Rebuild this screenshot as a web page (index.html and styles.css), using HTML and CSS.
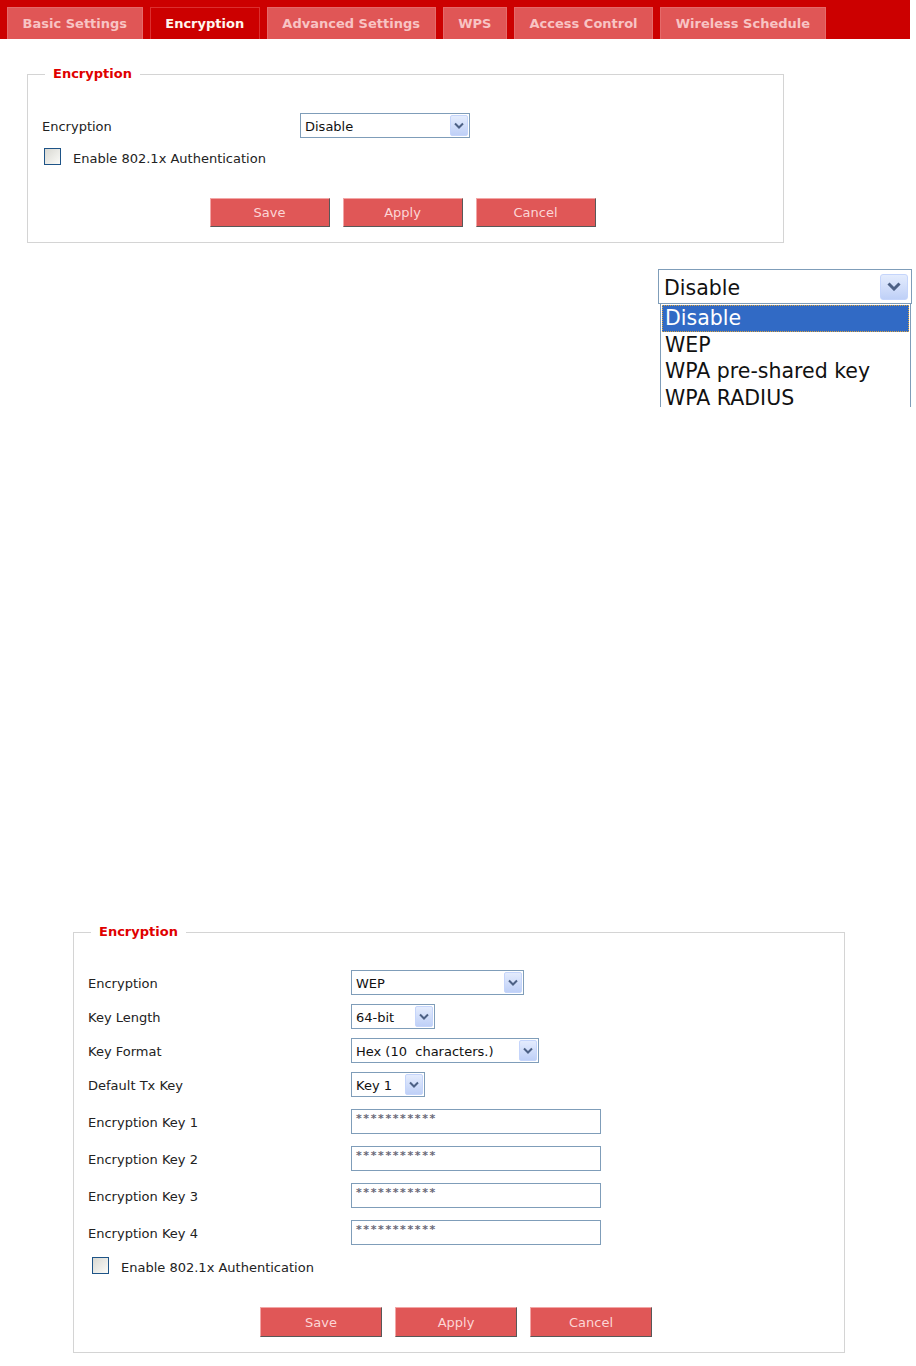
FILE: index.html
```html
<!DOCTYPE html>
<html lang="en">
<head>
<meta charset="utf-8">
<title>Wireless - Encryption</title>
<link rel="stylesheet" href="styles.css">
</head>
<body>
<nav class="tabs">
  <a class="tab">Basic Settings</a>
  <a class="tab tab--active">Encryption</a>
  <a class="tab">Advanced Settings</a>
  <a class="tab">WPS</a>
  <a class="tab">Access Control</a>
  <a class="tab">Wireless Schedule</a>
</nav>

<fieldset class="panel panel--basic">
  <legend>Encryption</legend>
  <div class="fields">
    <div class="field">
      <span class="field-label">Encryption</span>
      <div class="select select--enc-basic">
        <span class="select-value">Disable</span>
        <span class="select-arrow"><svg width="10" height="7" viewBox="0 0 10 7"><path d="M1 1.5 L5 5.5 L9 1.5" fill="none" stroke="#4d6185" stroke-width="2"/></svg></span>
      </div>
    </div>
  </div>
  <label class="check check--basic"><span class="checkbox"></span><span class="check-text">Enable 802.1x Authentication</span></label>
  <div class="actions">
    <button class="btn">Save</button>
    <button class="btn">Apply</button>
    <button class="btn">Cancel</button>
  </div>
</fieldset>

<div class="combo-demo">
  <div class="combo-field">
    <span class="combo-value">Disable</span>
    <span class="combo-arrow"><svg width="14" height="9" viewBox="0 0 14 9"><path d="M1.5 1.5 L7 7 L12.5 1.5" fill="none" stroke="#4d6185" stroke-width="3"/></svg></span>
  </div>
  <ul class="combo-list">
    <li class="combo-option combo-option--selected">Disable</li>
    <li class="combo-option">WEP</li>
    <li class="combo-option">WPA pre-shared key</li>
    <li class="combo-option">WPA RADIUS</li>
  </ul>
</div>

<fieldset class="panel panel--wep">
  <legend>Encryption</legend>
  <div class="fields">
    <div class="field">
      <span class="field-label">Encryption</span>
      <div class="select select--enc">
        <span class="select-value">WEP</span>
        <span class="select-arrow"><svg width="10" height="7" viewBox="0 0 10 7"><path d="M1 1.5 L5 5.5 L9 1.5" fill="none" stroke="#4d6185" stroke-width="2"/></svg></span>
      </div>
    </div>
    <div class="field">
      <span class="field-label">Key Length</span>
      <div class="select select--len">
        <span class="select-value">64-bit</span>
        <span class="select-arrow"><svg width="10" height="7" viewBox="0 0 10 7"><path d="M1 1.5 L5 5.5 L9 1.5" fill="none" stroke="#4d6185" stroke-width="2"/></svg></span>
      </div>
    </div>
    <div class="field">
      <span class="field-label">Key Format</span>
      <div class="select select--fmt">
        <span class="select-value">Hex (10  characters.)</span>
        <span class="select-arrow"><svg width="10" height="7" viewBox="0 0 10 7"><path d="M1 1.5 L5 5.5 L9 1.5" fill="none" stroke="#4d6185" stroke-width="2"/></svg></span>
      </div>
    </div>
    <div class="field">
      <span class="field-label">Default Tx Key</span>
      <div class="select select--tx">
        <span class="select-value">Key 1</span>
        <span class="select-arrow"><svg width="10" height="7" viewBox="0 0 10 7"><path d="M1 1.5 L5 5.5 L9 1.5" fill="none" stroke="#4d6185" stroke-width="2"/></svg></span>
      </div>
    </div>
    <div class="field field--text">
      <span class="field-label">Encryption Key 1</span>
      <div class="textbox">***********</div>
    </div>
    <div class="field field--text">
      <span class="field-label">Encryption Key 2</span>
      <div class="textbox">***********</div>
    </div>
    <div class="field field--text">
      <span class="field-label">Encryption Key 3</span>
      <div class="textbox">***********</div>
    </div>
    <div class="field field--text">
      <span class="field-label">Encryption Key 4</span>
      <div class="textbox">***********</div>
    </div>
  </div>
  <label class="check check--wep"><span class="checkbox"></span><span class="check-text">Enable 802.1x Authentication</span></label>
  <div class="actions">
    <button class="btn">Save</button>
    <button class="btn">Apply</button>
    <button class="btn">Cancel</button>
  </div>
</fieldset>
</body>
</html>
```

FILE: styles.css
```css
* { box-sizing: border-box; }

body {
  margin: 0;
  background: #fff;
  font-family: "DejaVu Sans", Tahoma, sans-serif;
  font-size: 13px;
  color: #222;
}

/* ---------- tab bar ---------- */
.tabs {
  display: flex;
  gap: 7px;
  width: 910px;
  height: 39px;
  padding: 7px 0 0 7px;
  background: #cc0000;
}
.tab {
  display: flex;
  align-items: center;
  justify-content: center;
  height: 32px;
  padding: 0 14.6px;
  background: #e05656;
  color: #f8c4c4;
  font-weight: bold;
  font-size: 13px;
  border: 1px solid #e56a6a;
  border-bottom: 0;
}
.tab--active {
  background: #cc0000;
  color: #fff6ee;
  border-color: #dc3030;
}

/* ---------- panels ---------- */
.panel {
  margin: 0;
  border: 1px solid #d4d4d4;
  padding: 31px 14px 15px;
  min-width: 0;
}
.panel legend {
  margin-left: 3px;
  padding: 0 8px;
  font-size: 13px;
  font-weight: bold;
  line-height: 16px;
  color: #e00000;
}
.panel--basic {
  margin: 27px 0 0 27px;
  width: 757px;
}
.panel--wep {
  margin: 517px 0 0 73px;
  width: 772px;
  padding-top: 30px;
  padding-bottom: 15px;
}

.fields {
  display: flex;
  flex-direction: column;
  gap: 9px;
}
.field {
  display: flex;
  align-items: center;
  height: 25px;
}
.field--text { margin-top: 3px; }
.field-label {
  flex: none;
  width: 258px;
  padding-top: 2px;
}
.panel--wep .field-label { width: 263px; }

/* ---------- select ---------- */
.select {
  display: flex;
  align-items: center;
  height: 25px;
  border: 1px solid #7f9db9;
  background: #fff;
  padding: 1px 1px 1px 4px;
}
.select-value {
  flex: 1;
  white-space: pre;
  color: #111;
  padding-top: 1px;
}
.select-arrow {
  flex: none;
  display: flex;
  align-items: center;
  justify-content: center;
  width: 18px;
  height: 21px;
  border: 1px solid #c5d5fb;
  border-radius: 2px;
  background: linear-gradient(#e4ecfd, #bfd0f7);
}
.select--enc-basic { width: 170px; }
.select--enc { width: 173px; }
.select--len { width: 84px; }
.select--fmt { width: 188px; }
.select--tx { width: 74px; }

/* ---------- text box ---------- */
.textbox {
  width: 250px;
  height: 25px;
  border: 1px solid #7f9db9;
  padding: 3px 4px;
  font-size: 11px;
  font-weight: bold;
  line-height: 12px;
  letter-spacing: 1.6px;
  color: #6a6a78;
}

/* ---------- checkbox ---------- */
.check {
  display: flex;
  align-items: center;
  gap: 12px;
  height: 17px;
}
.check--basic { margin-top: 10px; padding-left: 2px; }
.check--wep { margin-top: 12px; padding-left: 4px; }
.check-text { padding-top: 3px; }
.checkbox {
  flex: none;
  width: 17px;
  height: 17px;
  border: 1px solid #1e5487;
  background: linear-gradient(135deg, #d8d8d2, #fbfbf8);
}

/* ---------- buttons ---------- */
.actions {
  display: flex;
  justify-content: center;
  gap: 13px;
  margin-top: 33px;
  padding-right: 6px;
}
.btn {
  width: 120px;
  height: 29px;
  padding: 0;
  background: #e05757;
  color: #fcd6d6;
  font-family: "DejaVu Sans", Tahoma, sans-serif;
  font-size: 13px;
  border: 1px solid;
  border-color: #f2a6a6 #585858 #585858 #f2a6a6;
}
.panel--wep .btn {
  width: 122px;
  height: 30px;
}

/* ---------- open dropdown illustration ---------- */
.combo-demo {
  margin: 26px 0 0 658px;
  width: 254px;
  height: 138px;
  overflow: hidden;
  font-size: 20.5px;
  color: #111;
}
.combo-field {
  display: flex;
  align-items: center;
  height: 35px;
  border: 1px solid #7f9db9;
  padding: 2px 3px 2px 5px;
}
.combo-value { flex: 1; padding-top: 3px; }
.combo-arrow {
  flex: none;
  display: flex;
  align-items: center;
  justify-content: center;
  width: 28px;
  height: 26px;
  border: 1px solid #c5d5fb;
  border-radius: 3px;
  background: linear-gradient(#e4ecfd, #bfd0f7);
}
.combo-list {
  list-style: none;
  margin: 0 1px 0 2px;
  padding: 1px 1px 1px;
  border: 1px solid #7f9db9;
  border-top: 0;
}
.combo-option {
  height: 26.5px;
  line-height: 26px;
  padding-left: 3px;
  white-space: nowrap;
}
.combo-option--selected {
  background: #316ac5;
  color: #fff;
  outline: 1px dotted #d9a441;
  outline-offset: -1px;
}
```
